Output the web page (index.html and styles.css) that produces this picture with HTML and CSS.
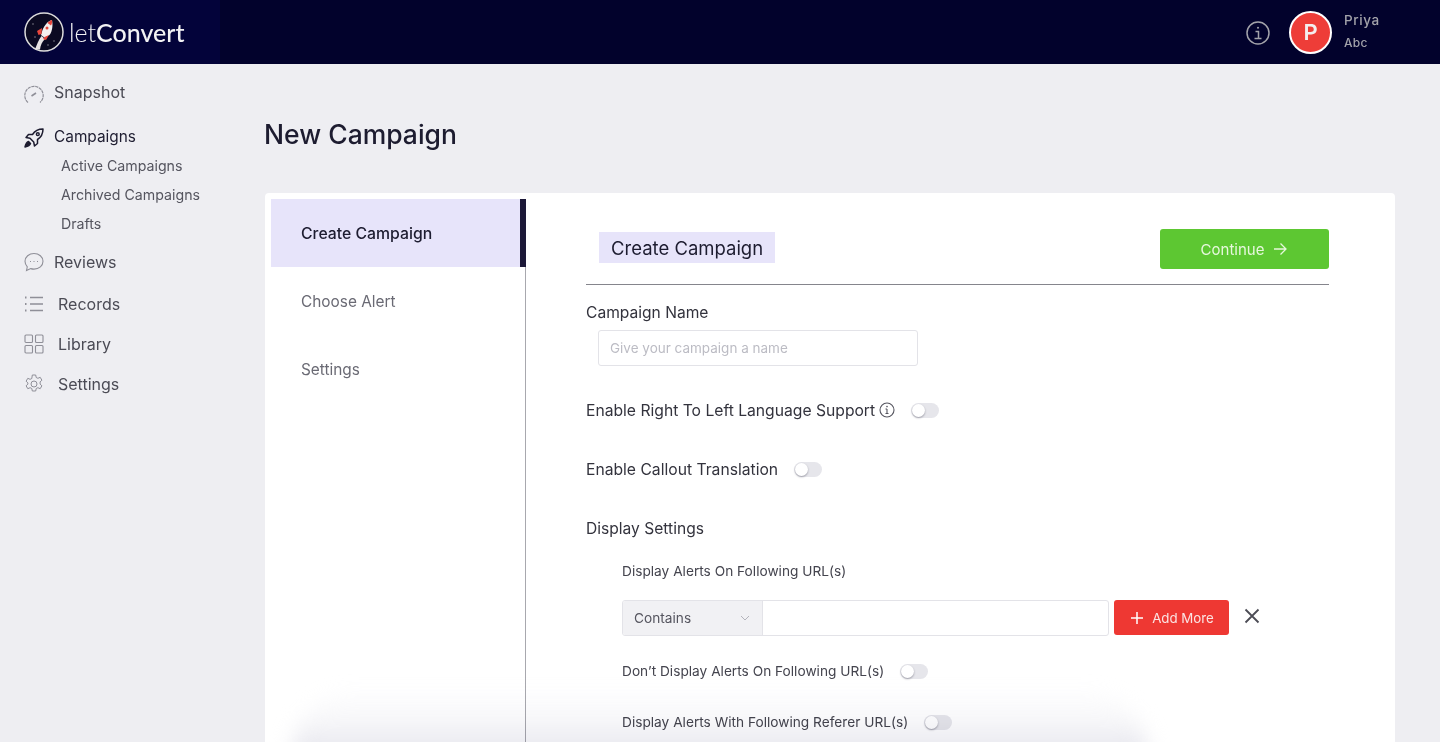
FILE: index.html
```html
<!DOCTYPE html>
<html lang="en">
<head>
<meta charset="utf-8">
<title>New Campaign</title>
<link rel="stylesheet" href="styles.css">
</head>
<body>
<header class="topbar">
  <div class="brand">
    <svg class="logo" viewBox="0 0 40 40" width="40" height="40">
      <circle cx="20" cy="20" r="19" fill="#0b0a22" stroke="#dcdcdc" stroke-width="1.500"/>
      <path d="M11 37.500C13 32 14.500 28 17.500 24l3.500 3c-3 3-4.500 6-5 10.500z" fill="#e8e4e4"/>
      <path d="M28 8c-4 1-7.500 5-9.500 10l-1.500 5 4 3 4.500-3c3-4 3.500-10 2.500-15z" fill="#f4efef"/>
      <path d="M28 8c-2 .5-3.500 1.700-4.500 3l3.500 2.500C28 12 28.300 10 28 8z" fill="#e8463c"/>
      <path d="M18 16l-5 3 1.500 4 3-1zM25 23l-3 5-3-1 1.500-2z" fill="#e8463c"/>
      <circle cx="23" cy="16" r="1.500" fill="#e8463c"/>
      <g fill="#9a9aa5"><circle cx="9" cy="12" r=".7"/><circle cx="11" cy="25" r=".7"/><circle cx="30" cy="29" r=".7"/><circle cx="24" cy="33" r=".7"/></g>
    </svg>
    <span class="wordmark"><span class="let">let</span><span class="convert">Convert</span></span>
  </div>
  <div class="account">
    <svg class="info" viewBox="0 0 24 24" width="24" height="24" fill="none" stroke="#a3a3aa" stroke-width="1.500">
      <circle cx="12" cy="12" r="11"/>
      <path d="M9.500 10.500h3v7M8.500 17.500h7"/>
      <circle cx="12" cy="6.800" r="1" fill="#a3a3aa" stroke="none"/>
    </svg>
    <div class="avatar">P</div>
    <div class="who"><div class="who-name">Priya</div><div class="who-org">Abc</div></div>
  </div>
</header>
<div class="shell">
  <aside class="sidebar">
    <nav>
      <a class="nav-item nav-snapshot">
        <svg class="nav-icon nav-icon-low" viewBox="0 0 20 20" fill="none" stroke="#8f8f98" stroke-width="1.200"><path d="M4 18.500A9.200 9.200 0 1 1 16 18.500" stroke-dasharray="3.200 .7"/><path d="M7.500 12l4.500-3" stroke-width="1.600"/></svg>
        <span class="nav-text">Snapshot</span>
      </a>
      <a class="nav-item nav-campaigns is-current">
        <svg class="nav-icon nav-icon-low" viewBox="0 0 20 20" fill="none" stroke="#1d1c30" stroke-width="1.500" stroke-linejoin="round"><path d="M19 1c-4.500 0-8 1.500-10.500 5.500H4.500L2 9.500l4 .8 3.700 3.700.8 4 3-2.500v-4C17.500 9 19 5.500 19 1z"/><circle cx="13.800" cy="6.200" r="1.400"/><path d="M4.500 13.500c-1.500.5-2.800 2.500-3.500 5.500 3-.7 5-2 5.500-3.500z" fill="#1d1c30"/></svg>
        <span class="nav-text nav-text-campaigns">Campaigns</span>
      </a>
      <ul class="subnav">
        <li>Active Campaigns</li>
        <li>Archived Campaigns</li>
        <li>Drafts</li>
      </ul>
      <a class="nav-item nav-reviews">
        <svg class="nav-icon" viewBox="0 0 20 20" fill="none" stroke="#8f8f98" stroke-width="1.100"><path d="M10 1.500c5 0 9 3.300 9 7.800s-4 7.800-9 7.800c-1.200 0-2.300-.2-3.300-.5L2.500 18.500l.8-3.700C1.900 13.400 1 11.500 1 9.300 1 4.800 5 1.500 10 1.500z"/><path d="M6 9.500h1M9.500 9.500h1M13 9.500h1"/></svg>
        <span class="nav-text">Reviews</span>
      </a>
      <a class="nav-item nav-records">
        <svg class="nav-icon" viewBox="0 0 20 20" fill="none" stroke="#8f8f98" stroke-width="1.300"><path d="M6 3.500h13M6 10h13M6 16.500h13"/><path d="M1 3.500h1.500M1 10h1.500M1 16.500h1.500" stroke-width="1.800"/></svg>
        <span class="nav-text nav-text-wide">Records</span>
      </a>
      <a class="nav-item nav-library">
        <svg class="nav-icon" viewBox="0 0 20 20" fill="none" stroke="#8f8f98" stroke-width="1.100"><rect x="1" y="1" width="7.500" height="7.500" rx="1"/><rect x="11.500" y="1" width="7.500" height="7.500" rx="1"/><rect x="1" y="11.500" width="7.500" height="7.500" rx="1"/><rect x="11.500" y="11.500" width="7.500" height="7.500" rx="1"/></svg>
        <span class="nav-text nav-text-wide">Library</span>
      </a>
      <a class="nav-item nav-settings">
        <svg class="nav-icon" viewBox="1 0 18 20" fill="none" stroke="#8f8f98" stroke-width="1"><path d="M8.300 1h3.400l.5 2.500 1.700.8 2.300-1 1.700 2.900-1.800 1.700v2.200l1.800 1.700-1.700 2.900-2.300-1-1.700.8-.5 2.500H8.300l-.5-2.500-1.700-.8-2.300 1-1.700-2.900 1.800-1.700V8.900L2.100 7.200l1.700-2.900 2.300 1 1.700-.8z" stroke-linejoin="round"/><circle cx="10" cy="10" r="3"/></svg>
        <span class="nav-text nav-text-wide">Settings</span>
      </a>
    </nav>
  </aside>
  <main class="main">
    <h1 class="page-title">New Campaign</h1>
    <section class="card">
      <div class="steps">
        <div class="step is-active">Create Campaign</div>
        <div class="step">Choose Alert</div>
        <div class="step">Settings</div>
      </div>
      <div class="form">
        <div class="form-head">
          <h2 class="form-title">Create Campaign</h2>
          <button class="btn-continue" type="button">Continue
            <svg viewBox="0 0 16 16" width="16" height="16" fill="none" stroke="#e6f7dc" stroke-width="1.300"><path d="M2 8h12M8.500 2.500L14 8l-5.500 5.500"/></svg>
          </button>
        </div>
        <label class="field-label">Campaign Name</label>
        <input class="name-input" type="text" placeholder="Give your campaign a name">
        <div class="toggle-row row-rtl">
          <span class="opt">Enable Right To Left Language Support</span>
          <svg class="tip" viewBox="0 0 16 16" width="16" height="16" fill="none" stroke="#55555f" stroke-width="1.100"><circle cx="8" cy="8" r="7"/><path d="M8 7v4.500M6.500 11.500h3M6.500 7H8"/><circle cx="8" cy="4.600" r=".8" fill="#55555f" stroke="none"/></svg>
          <span class="toggle"></span>
        </div>
        <div class="toggle-row row-callout">
          <span class="opt">Enable Callout Translation</span>
          <span class="toggle"></span>
        </div>
        <div class="section-label">Display Settings</div>
        <div class="display">
          <div class="small-label">Display Alerts On Following URL(s)</div>
          <div class="url-row">
            <div class="url-group">
              <div class="url-select">Contains
                <svg viewBox="0 0 10 6" width="10" height="6" fill="none" stroke="#b4b4bc" stroke-width="1"><path d="M1 1l4 4 4-4"/></svg>
              </div>
              <div class="url-value"></div>
            </div>
            <button class="btn-add" type="button">
              <svg viewBox="0 0 12 12" width="12" height="12" fill="none" stroke="#fff" stroke-width="1.500"><path d="M6 0v12M0 6h12"/></svg>
              Add More
            </button>
            <svg class="remove" viewBox="0 0 16 16" width="16" height="16" fill="none" stroke="#4c4c55" stroke-width="1.800"><path d="M1.500 1.500l13 13M14.500 1.500l-13 13"/></svg>
          </div>
          <div class="small-row row-dont">
            <span class="small-opt">Don’t Display Alerts On Following URL(s)</span>
            <span class="toggle"></span>
          </div>
          <div class="small-row row-referer">
            <span class="small-opt">Display Alerts With Following Referer URL(s)</span>
            <span class="toggle"></span>
          </div>
        </div>
      </div>
    </section>
  </main>
</div>
<div class="bottom-fade"></div>
</body>
</html>
```
FILE: styles.css
```css
* { box-sizing: border-box; }
html, body { margin: 0; height: 742px; overflow: hidden; }
body {
  position: relative;
  display: flex;
  flex-direction: column;
  font-family: Inter, "Liberation Sans", sans-serif;
  background: #eeeef2;
  color: #33333d;
}

/* top bar */
.topbar {
  height: 64px;
  flex: none;
  display: flex;
  justify-content: space-between;
  align-items: center;
  background: linear-gradient(90deg, #03033a 0, #03033a 220px, #02022c 220px);
}
.brand { display: flex; align-items: center; padding-left: 24px; }
.logo { display: block; }
.wordmark { margin-left: 5px; font-family: Lato, sans-serif; font-size: 25px; line-height: 32px; color: #f2f2f4; }
.let { font-weight: 300; }
.convert { font-weight: 500; }
.account { display: flex; align-items: center; width: 194px; }
.info { margin-top: 2px; }
.avatar {
  width: 43px; height: 43px;
  margin-left: 19px;
  border-radius: 50%;
  border: 2px solid #fff;
  background: #ee3d38;
  color: #f4eeee;
  font-size: 22px;
  font-weight: 600;
  line-height: 39px;
  text-align: center;
}
.who { margin-left: 12px; color: #a3a3aa; font-weight: 500; letter-spacing: .6px; }
.who-name { font-size: 13.500px; line-height: 16px; margin-top: -2px; }
.who-org { font-size: 12px; line-height: 14px; margin-top: 8px; letter-spacing: .3px; }

/* layout */
.shell { flex: 1; display: flex; min-height: 0; }
.sidebar { width: 265px; flex: none; padding: 16px 0 0 24px; }
.nav-item { display: flex; align-items: center; height: 24px; font-size: 16px; color: #4b4b55; }
.nav-icon { width: 20px; height: 20px; flex: none; }
.nav-icon-low { margin-top: 3px; }
.nav-text { margin-left: 10px; }
.nav-text-wide { margin-left: 14px; }
.nav-text-campaigns { font-size: 15.400px; }
.nav-campaigns { margin-top: 20px; }
.is-current { color: #1d1c30; }
.subnav { list-style: none; margin: 3px 0 0; padding: 0 0 0 37px; }
.subnav li { height: 29px; line-height: 29px; font-size: 14.200px; color: #55555f; }
.nav-reviews { margin-top: 12px; }
.nav-records { margin-top: 18px; }
.nav-library, .nav-settings { margin-top: 16px; }

.main { flex: 1; min-width: 0; padding-right: 45px; }
.page-title { margin: 52px 0 0 -1px; font-size: 26.500px; line-height: 36px; font-weight: 500; color: #1d1c30; }

/* card */
.card {
  display: flex;
  margin-top: 41px;
  height: 600px;
  padding: 6px;
  background: #fff;
  border-radius: 4px;
}
.steps { width: 255px; flex: none; border-right: 1px solid #a8a8ae; }
.step {
  height: 68px;
  line-height: 70px;
  padding-left: 30px;
  font-size: 15.400px;
  color: #6a6a74;
}
.step.is-active {
  margin-right: -1px;
  background: #e7e4fa;
  border-right: 6px solid #1c1838;
  color: #1d1c30;
  font-size: 15.800px;
  font-weight: 500;
}

/* form */
.form { flex: 1; padding: 30px 60px 0 60px; min-width: 0; }
.form-head {
  height: 56px;
  display: flex;
  justify-content: space-between;
  align-items: flex-start;
  border-bottom: 1px solid #85858c;
}
.form-title {
  margin: 3px 0 0 13px;
  height: 31px;
  padding: 0 12px;
  background: #e7e4fa;
  font-size: 18.500px;
  line-height: 33px;
  font-weight: 400;
  color: #1d1c30;
}
.btn-continue {
  width: 169px; height: 40px;
  display: flex; align-items: center; justify-content: center; gap: 8px;
  border: 0;
  border-radius: 3px;
  background: #5dc732;
  color: #e6f7dc;
  font: 400 15px Inter, sans-serif;
}
.field-label, .section-label { font-size: 15.600px; color: #33333d; }
.opt { font-size: 15.680px; color: #33333d; }
.field-label { display: block; margin-top: 18px; line-height: 20px; height: 18px; }
.name-input {
  display: block;
  width: 320px; height: 36px;
  margin: 9px 0 0 12px;
  padding: 0 11px;
  border: 1px solid #e3e3e8;
  border-radius: 3px;
  font: 400 13.500px Inter, sans-serif;
  outline: none;
}
.name-input::placeholder { color: #bcbcc4; opacity: 1; }
.toggle-row { display: flex; align-items: center; height: 20px; }
.row-rtl { margin-top: 34px; }
.row-callout { margin-top: 39px; }
.tip { margin-left: 4px; }
.toggle {
  position: relative;
  display: block;
  width: 28px; height: 15px;
  margin-left: 16px;
  border-radius: 8px;
  background: #e6e6eb;
}
.toggle::after {
  content: "";
  position: absolute;
  left: 1px; top: 1px;
  width: 13px; height: 13px;
  border-radius: 50%;
  background: #fff;
  box-shadow: 0 1px 2px rgba(40, 40, 60, .4);
}
.section-label { margin-top: 39px; line-height: 22px; height: 20px; }
.display { padding-left: 36px; }
.small-label, .small-opt { font-size: 13.700px; color: #44444e; }
.small-label { margin-top: 24px; line-height: 18px; }
.url-row { display: flex; align-items: flex-start; margin-top: 20px; }
.url-group {
  width: 487px; height: 36px;
  display: flex;
  border: 1px solid #e3e3e8;
  border-radius: 3px;
  overflow: hidden;
}
.url-select {
  width: 140px;
  display: flex; align-items: center; justify-content: space-between;
  padding: 0 12px 0 11px;
  background: #f1f1f4;
  border-right: 1px solid #e3e3e8;
  font-size: 13.700px;
  color: #55555f;
}
.url-value { flex: 1; }
.btn-add {
  width: 115px; height: 35px;
  margin-left: 5px;
  padding-left: 8px;
  display: flex; align-items: center; justify-content: center; gap: 9px;
  border: 0;
  border-radius: 3px;
  background: #ee3833;
  color: #fbe3e2;
  font: 400 13.300px Inter, sans-serif;
}
.remove { margin: 8px 0 0 15px; }
.small-row { display: flex; align-items: center; height: 18px; }
.row-dont { margin-top: 26px; }
.row-referer { margin-top: 33px; }

/* soft shadow rising from the bottom edge */
.bottom-fade {
  position: absolute;
  left: 292px; bottom: -50px;
  width: 856px; height: 98px;
  border-radius: 60px 60px 0 0;
  background: linear-gradient(180deg, rgba(236, 236, 242, .1) 0, rgba(238, 238, 243, .5) 30%, rgba(230, 230, 237, 1) 60%);
  filter: blur(10px);
  mix-blend-mode: multiply;
  pointer-events: none;
}
```
